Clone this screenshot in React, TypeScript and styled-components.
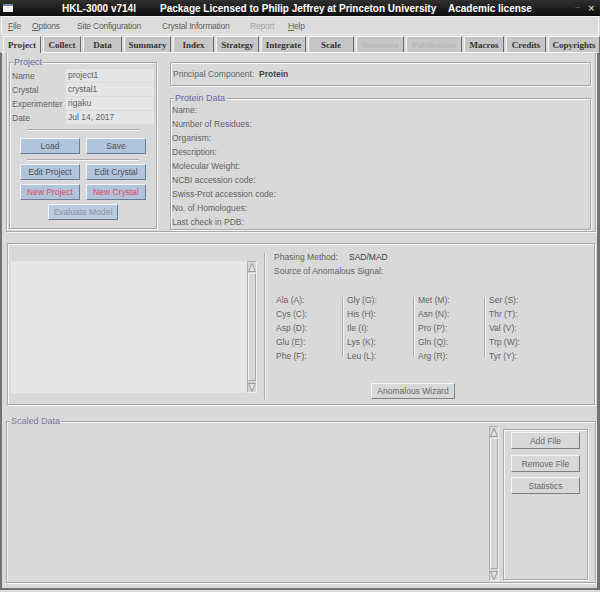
import React from "react";
import styled, { createGlobalStyle } from "styled-components";

const GlobalStyle = createGlobalStyle`
  html, body {
    margin: 0;
    padding: 0;
    background: #d9d9d9;
  }
  body {
    font-family: "Liberation Sans", Arial, sans-serif;
    color: #626262;
  }
  * {
    box-sizing: border-box;
  }
`;

const tabs = [
  { name: "Project", w: 38, active: true },
  { name: "Collect", w: 38 },
  { name: "Data", w: 39 },
  { name: "Summary", w: 47 },
  { name: "Index", w: 41 },
  { name: "Strategy", w: 43 },
  { name: "Integrate", w: 45 },
  { name: "Scale", w: 46 },
  { name: "Structure", w: 48, disabled: true },
  { name: "Publication", w: 56, disabled: true },
  { name: "Macros", w: 40 },
  { name: "Credits", w: 40 },
  { name: "Copyrights", w: 52 },
];

const menus = [
  { name: "File", w: 24, u: true },
  { name: "Options", w: 45, u: true },
  { name: "Site Configuration", w: 85 },
  { name: "Crystal Information", w: 88 },
  { name: "Report", w: 38, disabled: true },
  { name: "Help", w: 30, u: true },
];

const proteinFields = [
  "Name:",
  "Number of Residues:",
  "Organism:",
  "Description:",
  "Molecular Weight:",
  "NCBI accession code:",
  "Swiss-Prot accession code:",
  "No. of Homologues:",
  "Last check in PDB:",
];

const aminoCols = [
  ["Ala (A):", "Cys (C):", "Asp (D):", "Glu (E):", "Phe (F):"],
  ["Gly (G):", "His (H):", "Ile (I):", "Lys (K):", "Leu (L):"],
  ["Met (M):", "Asn (N):", "Pro (P):", "Gln (Q):", "Arg (R):"],
  ["Ser (S):", "Thr (T):", "Val (V):", "Trp (W):", "Tyr (Y):"],
];

function Scrollbar({ height }: { height: number }) {
  return (
    <ScrollTrack style={{ height }}>
      <ArrowBox>
        <svg width="8" height="9" viewBox="0 0 8 9">
          <polygon points="0.5,8.5 4,0.5 7.5,8.5" fill="#e2e2e2" stroke="#9a9a9a" />
        </svg>
      </ArrowBox>
      <Thumb />
      <ArrowBox>
        <svg width="8" height="9" viewBox="0 0 8 9">
          <polygon points="0.5,0.5 4,8.5 7.5,0.5" fill="#e2e2e2" stroke="#9a9a9a" />
        </svg>
      </ArrowBox>
    </ScrollTrack>
  );
}

export default function App() {
  return (
    <>
      <GlobalStyle />
      <Window>
        <TitleBar>
          <TitleSlot>
            <WinIcon />
          </TitleSlot>
          <TitleSlot>HKL-3000 v714l</TitleSlot>
          <TitleSlot>Package Licensed to Philip Jeffrey at Princeton University</TitleSlot>
          <TitleSlot>Academic license</TitleSlot>
          <WinControls>
            <span>_</span>
            <span>✕</span>
          </WinControls>
        </TitleBar>

        <MenuBar>
          {menus.map(m => (
            <MenuItem key={m.name} $w={m.w} $disabled={m.disabled}>
              {m.u ? (
                <>
                  <u>{m.name[0]}</u>
                  {m.name.slice(1)}
                </>
              ) : (
                m.name
              )}
            </MenuItem>
          ))}
        </MenuBar>

        <TabBar>
          {tabs.map(t => (
            <Tab key={t.name} $w={t.w} $active={t.active} $disabled={t.disabled}>
              {t.name}
            </Tab>
          ))}
        </TabBar>

        <Body>
          <TopSection>
            <ProjectBox>
              <Legend>Project</Legend>
              <FieldRow>
                <FieldLabel>Name</FieldLabel>
                <FieldValue>project1</FieldValue>
              </FieldRow>
              <FieldRow>
                <FieldLabel>Crystal</FieldLabel>
                <FieldValue>crystal1</FieldValue>
              </FieldRow>
              <FieldRow>
                <FieldLabel>Experimenter</FieldLabel>
                <FieldValue>rigaku</FieldValue>
              </FieldRow>
              <FieldRow>
                <FieldLabel>Date</FieldLabel>
                <FieldValue>Jul 14, 2017</FieldValue>
              </FieldRow>
              <HRule $top={4} />
              <ButtonRow $top={7}>
                <BlueButton>Load</BlueButton>
                <BlueButton>Save</BlueButton>
              </ButtonRow>
              <HRule $top={5} />
              <ButtonRow $top={3}>
                <BlueButton>Edit Project</BlueButton>
                <BlueButton>Edit Crystal</BlueButton>
              </ButtonRow>
              <ButtonRow $top={4}>
                <BlueButton $tone="red">New Project</BlueButton>
                <BlueButton $tone="red">New Crystal</BlueButton>
              </ButtonRow>
              <ButtonRow $top={4}>
                <BlueButton $tone="disabled" $w={70}>
                  Evaluate Model
                </BlueButton>
              </ButtonRow>
            </ProjectBox>

            <RightColumn>
              <PrincipalBox>
                Principal Component:&nbsp;&nbsp;<Strong>Protein</Strong>
              </PrincipalBox>
              <ProteinBox>
                <Legend>Protein Data</Legend>
                {proteinFields.map(f => (
                  <ProteinRow key={f}>{f}</ProteinRow>
                ))}
              </ProteinBox>
            </RightColumn>
          </TopSection>

          <MiddleSection>
            <ListPane>
              <ListArea />
              <Scrollbar height={132} />
            </ListPane>
            <VSeparator />
            <PhasingPane>
              <InfoRow>
                <InfoLabel>Phasing Method:</InfoLabel>
                <InfoValue>SAD/MAD</InfoValue>
              </InfoRow>
              <InfoRow>Source of Anomalous Signal:</InfoRow>
              <AminoGrid>
                {aminoCols.map((col, i) => (
                  <AminoCol key={i} $first={i === 0}>
                    {col.map(a => (
                      <AminoRow key={a}>{a}</AminoRow>
                    ))}
                  </AminoCol>
                ))}
              </AminoGrid>
              <GrayButton $w={84} $h={16} $left={97} $top={20}>
                Anomalous Wizard
              </GrayButton>
            </PhasingPane>
          </MiddleSection>

          <ScaledSection>
            <Legend $tone="muted">Scaled Data</Legend>
            <Scrollbar height={155} />
            <SidePanel>
              <GrayButton $w={69} $top={0}>
                Add File
              </GrayButton>
              <GrayButton $w={69} $top={6}>
                Remove File
              </GrayButton>
              <GrayButton $w={69} $top={5}>
                Statistics
              </GrayButton>
            </SidePanel>
          </ScaledSection>
        </Body>
      </Window>
    </>
  );
}

const Window = styled.div`
  width: 600px;
  height: 592px;
  display: flex;
  flex-direction: column;
  overflow: hidden;
  background: #d9d9d9;
  font-size: 8.5px;
`;

const TitleBar = styled.div`
  height: 16px;
  flex: none;
  display: grid;
  grid-template-columns: 62px 98px 288px 1fr auto;
  align-items: center;
  background: linear-gradient(#303030, #0c0c0c);
  color: #ffffff;
  font-family: "Liberation Sans", Arial, sans-serif;
  font-weight: bold;
  font-size: 10px;
  white-space: nowrap;
`;

const TitleSlot = styled.div`
  display: flex;
  align-items: center;
`;

const WinIcon = styled.div`
  margin-left: 3px;
  width: 10px;
  height: 8px;
  background: #f4f4f4;
  border-top: 2px solid #7a8aa8;
`;

const WinControls = styled.div`
  display: flex;
  gap: 8px;
  padding-right: 5px;
  color: #c8c8c8;
  font-size: 8px;
  span:first-child {
    margin-top: -4px;
  }
`;

const MenuBar = styled.div`
  height: 19px;
  flex: none;
  display: flex;
  align-items: center;
  padding-left: 6px;
  margin: 0 1px;
  background: #dcdcdc;
  border: 1px solid #f2f2f2;
  border-bottom-color: #ececec;
  font-size: 8.5px;
`;

const MenuItem = styled.div<{ $w: number; $disabled?: boolean }>`
  width: ${p => p.$w}px;
  color: ${p => (p.$disabled ? "#a2a2a2" : "#5e5e5e")};
  white-space: nowrap;
  letter-spacing: -0.2px;
`;

const TabBar = styled.div`
  height: 17px;
  flex: none;
  display: flex;
  align-items: flex-end;
  gap: 2px;
  padding-left: 3px;
`;

const Tab = styled.div<{ $w: number; $active?: boolean; $disabled?: boolean }>`
  position: relative;
  z-index: ${p => (p.$active ? 1 : 0)};
  width: ${p => p.$w}px;
  flex: none;
  height: ${p => (p.$active ? 17 : 16)}px;
  margin-bottom: ${p => (p.$active ? -1 : 0)}px;
  display: flex;
  align-items: center;
  justify-content: center;
  background: ${p => (p.$active ? "#d9d9d9" : "#c6c6c6")};
  border-top: 1px solid #f6f6f6;
  border-left: 1px solid #f6f6f6;
  border-right: 1px solid #6a6a6a;
  font-family: "Liberation Serif", "Times New Roman", serif;
  font-weight: bold;
  font-size: 9px;
  color: ${p => (p.$disabled ? "#b8b8b8" : "#333333")};
  white-space: nowrap;
  overflow: hidden;
`;

const Body = styled.div`
  flex: 1;
  display: flex;
  flex-direction: column;
  border-top: 1px solid #f6f6f6;
  border-left: 2px solid #727272;
  border-right: 3px solid #727272;
  border-bottom: 2px solid #727272;
  margin-bottom: 2px;
  padding: 0 1px 0 4px;
`;

const Legend = styled.span<{ $tone?: "muted" }>`
  position: absolute;
  top: -6px;
  left: 3px;
  padding: 0 1px;
  background: #d9d9d9;
  color: ${p => (p.$tone === "muted" ? "#7a7aa2" : "#6868a8")};
  font-size: 9px;
  line-height: 11px;
`;

const TopSection = styled.div`
  height: 179px;
  flex: none;
  display: flex;
  padding: 9px 0 0 2px;
  border: 1px solid #a8a8a8;
  border-top: none;
  box-shadow: inset 1px 0 0 #f6f6f6, 1px 1px 0 #f6f6f6;
`;

const GrooveBox = styled.div`
  position: relative;
  border: 1px solid #a6a6a6;
  box-shadow: inset 1px 1px 0 #f6f6f6, 1px 1px 0 #f6f6f6;
`;

const ProjectBox = styled(GrooveBox)`
  width: 148px;
  height: 167px;
  padding: 6px 2px 0 2px;
  display: flex;
  flex-direction: column;
`;

const FieldRow = styled.div`
  display: flex;
  align-items: center;
  height: 13px;
  margin-bottom: 1px;
`;

const FieldLabel = styled.div`
  width: 54px;
  white-space: nowrap;
`;

const FieldValue = styled.div`
  width: 88px;
  height: 13px;
  line-height: 13px;
  padding-left: 2px;
  background: #e5e5e5;
  white-space: nowrap;
`;

const HRule = styled.div<{ $top: number }>`
  width: 112px;
  margin: ${p => p.$top}px 0 0 15px;
  border-top: 1px solid #a8a8a8;
  border-bottom: 1px solid #f6f6f6;
`;

const ButtonRow = styled.div<{ $top: number }>`
  display: flex;
  justify-content: center;
  gap: 6px;
  margin-top: ${p => p.$top}px;
`;

const BlueButton = styled.div<{ $tone?: "red" | "disabled"; $w?: number }>`
  width: ${p => p.$w ?? 60}px;
  height: 16px;
  display: flex;
  align-items: center;
  justify-content: center;
  background: ${p => (p.$tone === "disabled" ? "#bccce0" : "#b1c4de")};
  border: 1px solid;
  border-color: #f2f5fa #6c7b90 #6c7b90 #f2f5fa;
  color: ${p =>
    p.$tone === "red" ? "#e2435c" : p.$tone === "disabled" ? "#8a919c" : "#505050"};
  white-space: nowrap;
`;

const RightColumn = styled.div`
  width: 421px;
  margin-left: 13px;
  display: flex;
  flex-direction: column;
`;

const PrincipalBox = styled(GrooveBox)`
  height: 24px;
  display: flex;
  align-items: center;
  padding-left: 2px;
  white-space: nowrap;
`;

const Strong = styled.span`
  font-weight: bold;
  color: #444444;
`;

const ProteinBox = styled(GrooveBox)`
  margin-top: 12px;
  height: 132px;
  padding: 4px 0 0 1px;
`;

const ProteinRow = styled.div`
  height: 14px;
  line-height: 14px;
  white-space: nowrap;
`;

const MiddleSection = styled(GrooveBox)`
  margin: 11px 1px 0 1px;
  height: 162px;
  flex: none;
  display: flex;
`;

const ListPane = styled.div`
  width: 249px;
  padding: 17px 0 0 3px;
  display: flex;
  align-items: flex-start;
`;

const ListArea = styled.div`
  width: 236px;
  height: 132px;
  background: #e6e6e6;
`;

const ScrollTrack = styled.div`
  width: 10px;
  flex: none;
  display: flex;
  flex-direction: column;
  background: #d6d6d6;
  border: 1px solid #b0b0b0;
  border-right-color: #f2f2f2;
  border-bottom-color: #f2f2f2;
`;

const ArrowBox = styled.div`
  height: 10px;
  flex: none;
  display: flex;
  align-items: center;
  justify-content: center;
`;

const Thumb = styled.div`
  flex: 1;
  margin: 1px 0;
  border: 1px solid #f2f2f2;
  border-right-color: #a8a8a8;
  border-bottom-color: #a8a8a8;
`;

const VSeparator = styled.div`
  width: 1px;
  height: 147px;
  margin: 9px 0 0 7px;
  background: #a8a8a8;
  box-shadow: 1px 0 0 #f6f6f6;
`;

const PhasingPane = styled.div`
  flex: 1;
  padding: 6px 0 0 9px;
  display: flex;
  flex-direction: column;
  align-items: flex-start;
`;

const InfoRow = styled.div`
  height: 14px;
  line-height: 14px;
  display: flex;
  white-space: nowrap;
`;

const InfoLabel = styled.div`
  width: 75px;
`;

const InfoValue = styled.div`
  color: #404040;
`;

const AminoGrid = styled.div`
  display: flex;
  margin: 15px 0 0 2px;
`;

const AminoCol = styled.div<{ $first?: boolean }>`
  position: relative;
  width: ${p => (p.$first ? 66 : 71)}px;
  padding-left: ${p => (p.$first ? 0 : 5)}px;
  &::before {
    content: "";
    display: ${p => (p.$first ? "none" : "block")};
    position: absolute;
    left: 0;
    top: 4px;
    bottom: 6px;
    width: 1px;
    background: #a8a8a8;
    box-shadow: 1px 0 0 #f6f6f6;
  }
`;

const AminoRow = styled.div`
  height: 14px;
  line-height: 14px;
  white-space: nowrap;
`;

const GrayButton = styled.div<{ $w: number; $h?: number; $left?: number; $top: number }>`
  width: ${p => p.$w}px;
  height: ${p => p.$h ?? 17}px;
  margin: ${p => p.$top}px 0 0 ${p => p.$left ?? 0}px;
  display: flex;
  align-items: center;
  justify-content: center;
  background: #d8d8d8;
  border: 1px solid;
  border-color: #f6f6f6 #7e7e7e #7e7e7e #f6f6f6;
  color: #666666;
  white-space: nowrap;
`;

const ScaledSection = styled(GrooveBox)`
  margin-top: 16px;
  height: 162px;
  flex: none;
  display: flex;
  justify-content: flex-end;
  align-items: flex-start;
  gap: 4px;
  padding: 4px 7px 0 0;
`;

const SidePanel = styled.div`
  width: 85px;
  height: 151px;
  margin-top: 3px;
  padding: 2px 0 0 7px;
  border: 1px solid #a8a8a8;
  box-shadow: inset 1px 1px 0 #f6f6f6, 1px 1px 0 #f6f6f6;
  display: flex;
  flex-direction: column;
`;
